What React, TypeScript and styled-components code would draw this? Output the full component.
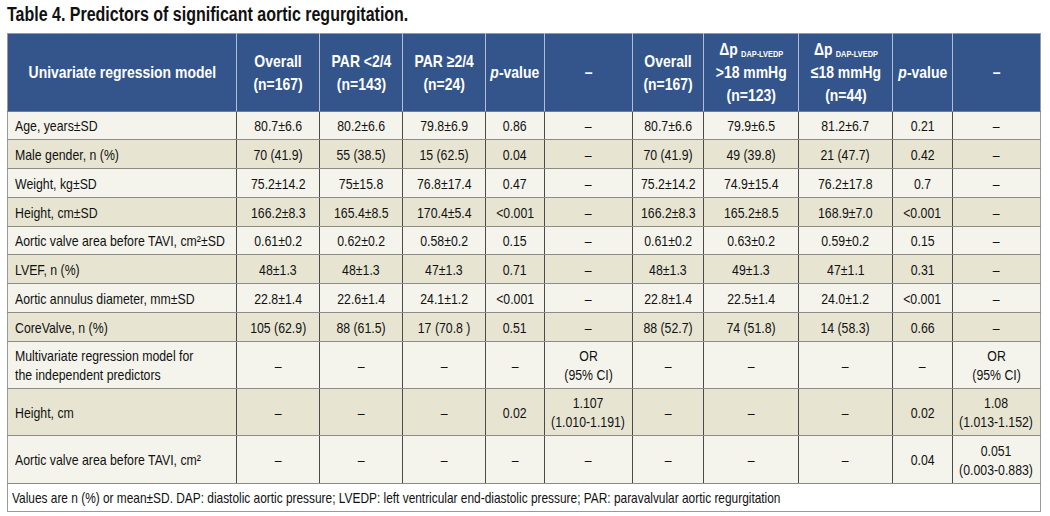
import React from "react";
import styled, { createGlobalStyle } from "styled-components";

const GlobalStyle = createGlobalStyle`
  html, body { margin: 0; padding: 0; background: #ffffff; }
  body { font-family: "Liberation Sans", Arial, sans-serif; color: #111; }
`;

const SQUEEZE = 0.82;

const Page = styled.div`
  width: 1050px;
  height: 516px;
  box-sizing: border-box;
  padding: 3px 9px 0 7px;
  overflow: hidden;
`;

const Title = styled.h1`
  margin: 0 0 8px 0;
  font-size: 19.5px;
  line-height: 22px;
  font-weight: 700;
  color: #111;
  white-space: nowrap;
`;

/* Narrow-face emulation: the reference uses a condensed gothic face. */
const Squeeze = styled.span<{ $left?: boolean }>`
  display: inline-block;
  white-space: nowrap;
  transform: scaleX(${SQUEEZE});
  transform-origin: ${(p) => (p.$left ? "left center" : "center center")};
`;

const Box = styled.div<{ $left?: boolean }>`
  display: flex;
  justify-content: ${(p) => (p.$left ? "flex-start" : "center")};
  text-align: ${(p) => (p.$left ? "left" : "center")};
`;

const Table = styled.table`
  border-collapse: collapse;
  table-layout: fixed;
  width: 1034px;
  border: 1px solid #9a9a9a;
`;

const HeadRow = styled.tr`
  height: 78px;
  background: #33558c;
`;

const HeadCell = styled.th`
  padding: 0;
  color: #ffffff;
  font-size: 17px;
  line-height: 23px;
  font-weight: 700;
  vertical-align: middle;
  border-left: 1px solid #b4bed0;
  border-right: 1px solid #b4bed0;
  border-bottom: 1px solid #7c7c7c;
  &:first-child { border-left-color: #9a9a9a; }
  &:last-child { border-right-color: #9a9a9a; }
`;

const Sub = styled.span`
  font-size: 9px;
  line-height: 0;
  vertical-align: -2px;
  margin-left: 4px;
`;

const Row = styled.tr<{ $shade: boolean; $h: number }>`
  height: ${(p) => p.$h}px;
  background: ${(p) => (p.$shade ? "#e7e5d1" : "#f4f4ec")};
`;

const Cell = styled.td<{ $left?: boolean }>`
  padding: 0 0 0 ${(p) => (p.$left ? "7px" : "0")};
  font-size: 15px;
  line-height: 19px;
  vertical-align: middle;
  color: #111;
  border-left: 1px solid #4a4a4a;
  border-right: 1px solid #4a4a4a;
  border-bottom: 1px solid #8c8c86;
  &:first-child { border-left-color: #9a9a9a; }
  &:last-child { border-right-color: #9a9a9a; }
`;

const NoteCell = styled.td`
  height: 27px;
  padding: 0 0 0 4px;
  background: #ffffff;
  font-size: 14.5px;
  line-height: 18px;
  vertical-align: middle;
  color: #111;
  border: 1px solid #9a9a9a;
  border-top: 1px solid #4a4a4a;
`;

const cols = [229, 83, 83, 83, 59, 88, 71, 95, 94, 60, 88];

const D = "–";

type R = { cells: React.ReactNode[]; h: number };

const rows: R[] = [
  { h: 28, cells: ["Age, years±SD", "80.7±6.6", "80.2±6.6", "79.8±6.9", "0.86", D, "80.7±6.6", "79.9±6.5", "81.2±6.7", "0.21", D] },
  { h: 29, cells: ["Male gender, n (%)", "70 (41.9)", "55 (38.5)", "15 (62.5)", "0.04", D, "70 (41.9)", "49 (39.8)", "21 (47.7)", "0.42", D] },
  { h: 29, cells: ["Weight, kg±SD", "75.2±14.2", "75±15.8", "76.8±17.4", "0.47", D, "75.2±14.2", "74.9±15.4", "76.2±17.8", "0.7", D] },
  { h: 29, cells: ["Height, cm±SD", "166.2±8.3", "165.4±8.5", "170.4±5.4", "<0.001", D, "166.2±8.3", "165.2±8.5", "168.9±7.0", "<0.001", D] },
  { h: 28, cells: ["Aortic valve area before TAVI, cm²±SD", "0.61±0.2", "0.62±0.2", "0.58±0.2", "0.15", D, "0.61±0.2", "0.63±0.2", "0.59±0.2", "0.15", D] },
  { h: 29, cells: ["LVEF, n (%)", "48±1.3", "48±1.3", "47±1.3", "0.71", D, "48±1.3", "49±1.3", "47±1.1", "0.31", D] },
  { h: 29, cells: ["Aortic annulus diameter, mm±SD", "22.8±1.4", "22.6±1.4", "24.1±1.2", "<0.001", D, "22.8±1.4", "22.5±1.4", "24.0±1.2", "<0.001", D] },
  { h: 29, cells: ["CoreValve, n (%)", "105 (62.9)", "88 (61.5)", "17 (70.8 )", "0.51", D, "88 (52.7)", "74 (51.8)", "14 (58.3)", "0.66", D] },
  {
    h: 47,
    cells: [
      <>Multivariate regression model for<br />the independent predictors</>,
      D, D, D, D,
      <>OR<br />(95% CI)</>,
      D, D, D, D,
      <>OR<br />(95% CI)</>,
    ],
  },
  {
    h: 47,
    cells: [
      "Height, cm", D, D, D, "0.02",
      <>1.107<br />(1.010-1.191)</>,
      D, D, D, "0.02",
      <>1.08<br />(1.013-1.152)</>,
    ],
  },
  {
    h: 48,
    cells: [
      "Aortic valve area before TAVI, cm²", D, D, D, D, D, D, D, D, "0.04",
      <>0.051<br />(0.003-0.883)</>,
    ],
  },
];

const PValue = () => (
  <>
    <i>p</i>-value
  </>
);

const heads: React.ReactNode[] = [
  "Univariate regression model",
  <>Overall<br />(n=167)</>,
  <>PAR &lt;2/4<br />(n=143)</>,
  <>PAR ≥2/4<br />(n=24)</>,
  <PValue />,
  D,
  <>Overall<br />(n=167)</>,
  <>Δp<Sub>DAP-LVEDP</Sub><br />&gt;18 mmHg<br />(n=123)</>,
  <>Δp<Sub>DAP-LVEDP</Sub><br />≤18 mmHg<br />(n=44)</>,
  <PValue />,
  D,
];

const Fit = ({ left, children }: { left?: boolean; children: React.ReactNode }) => (
  <Box $left={left}>
    <Squeeze $left={left}>{children}</Squeeze>
  </Box>
);

export default function App() {
  return (
    <>
      <GlobalStyle />
      <Page>
        <Title>
          <Squeeze $left>Table 4. Predictors of significant aortic regurgitation.</Squeeze>
        </Title>
        <Table>
          <colgroup>
            {cols.map((w, i) => (
              <col key={i} style={{ width: w }} />
            ))}
          </colgroup>
          <thead>
            <HeadRow>
              {heads.map((h, i) => (
                <HeadCell key={i}>
                  <Fit>{h}</Fit>
                </HeadCell>
              ))}
            </HeadRow>
          </thead>
          <tbody>
            {rows.map((r, i) => (
              <Row key={i} $shade={i % 2 === 1} $h={r.h}>
                {r.cells.map((c, j) => (
                  <Cell key={j} $left={j === 0}>
                    <Fit left={j === 0}>{c}</Fit>
                  </Cell>
                ))}
              </Row>
            ))}
            <tr>
              <NoteCell colSpan={11}>
                <Fit left>
                  Values are n (%) or mean±SD. DAP: diastolic aortic pressure; LVEDP: left ventricular end-diastolic
                  pressure; PAR: paravalvular aortic regurgitation
                </Fit>
              </NoteCell>
            </tr>
          </tbody>
        </Table>
      </Page>
    </>
  );
}
